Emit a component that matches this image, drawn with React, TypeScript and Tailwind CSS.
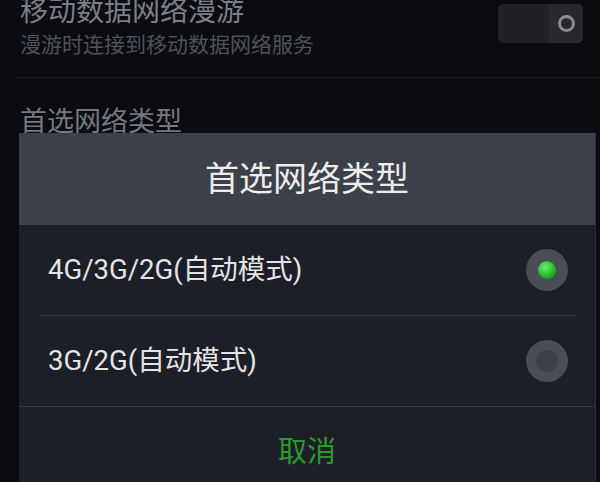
import React from 'react';

const font = { fontFamily: 'Roboto, "Noto Sans CJK SC", sans-serif' };

type Option = { label: string; selected: boolean };

const options: Option[] = [
  { label: '4G/3G/2G(自动模式)', selected: true },
  { label: '3G/2G(自动模式)', selected: false },
];

function Radio({ on }: { on: boolean }) {
  return (
    <div className="flex h-[42px] w-[42px] items-center justify-center rounded-full bg-[#4a4d56]">
      {on ? (
        <div className="h-[18px] w-[18px] rounded-full bg-[radial-gradient(circle_at_40%_35%,#6cf06c,#1fb31f_60%,#138c13)]" />
      ) : (
        <div className="h-[22px] w-[22px] rounded-full bg-[#3d4048]" />
      )}
    </div>
  );
}

function Toggle() {
  return (
    <div className="flex h-[39px] w-[85px] overflow-hidden rounded-[5px] bg-[#1f2126]">
      <div className="flex-1" />
      <div className="flex w-[34px] items-center justify-center bg-[#27292e]">
        <div className="h-[17px] w-[17px] rounded-full border-[3px] border-[#8b8c8f]" />
      </div>
    </div>
  );
}

export default function App() {
  return (
    <div className="relative h-[482px] w-[600px] overflow-hidden bg-[#0b0c11]" style={font}>
      {/* settings list behind the dialog */}
      <div className="flex items-start justify-between pl-5 pr-[17px]">
        <div className="-mt-[3px]">
          <div className="text-[28px] leading-[30px] text-[#7c7f85]">移动数据网络漫游</div>
          <div className="mt-[6px] text-[21px] leading-[24px] text-[#4f5258]">漫游时连接到移动数据网络服务</div>
        </div>
        <div className="mt-[4px]">
          <Toggle />
        </div>
      </div>
      <div className="ml-[15px] mt-[20px] h-px bg-[#1a1c21]" />
      <div className="mt-[29px] pl-5 text-[27px] leading-[30px] text-[#75787e]">首选网络类型</div>

      {/* dialog */}
      <div className="absolute left-[19px] top-[133px] w-[577px] border-r border-[#2c3038] bg-[#1c1f27]">
        <div className="flex h-[92px] items-center justify-center bg-[#3c4048] text-[34px] text-[#ececec]">
          首选网络类型
        </div>
        {options.map((o, i) => (
          <div key={o.label}>
            {i > 0 && <div className="ml-[21px] mr-[19px] h-[1px] bg-[#30343c]" />}
            <div className="flex h-[90px] items-center justify-between pl-[29px] pr-[27px]">
              <span className="text-[27.5px] text-[#e4e4e4]">{o.label}</span>
              <Radio on={o.selected} />
            </div>
          </div>
        ))}
        <div className="h-[1px] bg-[#353942]" />
        <div className="flex h-[90px] items-start justify-center pt-[28px]">
          <span className="text-[29px] leading-[34px] text-[#2b9a2b]">取消</span>
        </div>
      </div>
    </div>
  );
}
